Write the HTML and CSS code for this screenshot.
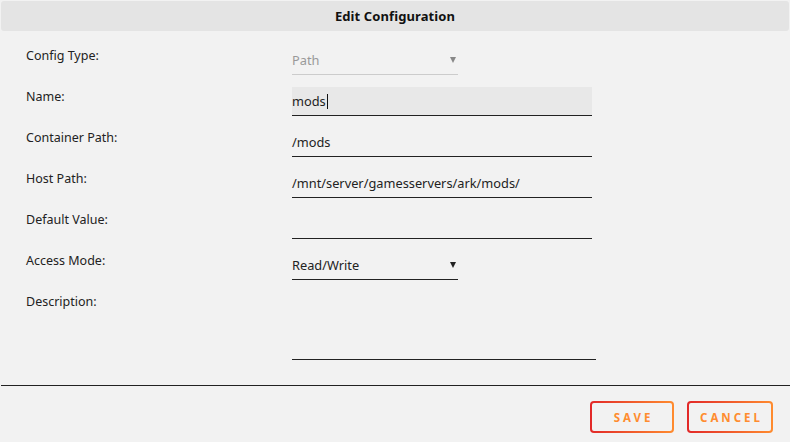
FILE: index.html
```html
<!DOCTYPE html>
<html>
<head>
<meta charset="utf-8">
<link rel="stylesheet" href="styles.css">
</head>
<body>
<div class="dialog">
  <div class="title">Edit Configuration</div>
  <div class="form">
    <div class="row">
      <div class="label">Config Type:</div>
      <div class="field select disabled"><span>Path</span><span class="arrow"></span></div>
    </div>
    <div class="row">
      <div class="label">Name:</div>
      <div class="field input focus"><span>mods</span><span class="caret"></span></div>
    </div>
    <div class="row">
      <div class="label">Container Path:</div>
      <div class="field input"><span>/mods</span></div>
    </div>
    <div class="row">
      <div class="label">Host Path:</div>
      <div class="field input"><span>/mnt/server/gamesservers/ark/mods/</span></div>
    </div>
    <div class="row">
      <div class="label">Default Value:</div>
      <div class="field input"></div>
    </div>
    <div class="row">
      <div class="label">Access Mode:</div>
      <div class="field select"><span>Read/Write</span><span class="arrow"></span></div>
    </div>
    <div class="row">
      <div class="label">Description:</div>
      <div class="field textarea"></div>
    </div>
  </div>
  <div class="footer">
    <button class="btn save">SAVE</button>
    <button class="btn cancel">CANCEL</button>
  </div>
</div>
</body>
</html>
```

FILE: styles.css
```css
html, body {
  margin: 0;
  padding: 0;
  background: #f2f2f2;
}
body {
  font-family: "Noto Sans", "Open Sans", sans-serif;
  font-size: 12.5px;
  color: #222;
}
.dialog {
  width: 790px;
  height: 442px;
  display: flex;
  flex-direction: column;
}
.title {
  margin: 1px 1px 0 1px;
  height: 30px;
  background: #e4e4e4;
  border-radius: 3px;
  display: flex;
  align-items: center;
  justify-content: center;
  font-weight: 700;
  font-size: 13px;
  color: #111;
  letter-spacing: 0.1px;
}
.form {
  padding: 15px 0 25px 25px;
  display: flex;
  flex-direction: column;
  gap: 12px;
  border-bottom: 1px solid #222;
  margin-left: 1px;
}
.row {
  display: flex;
}
.label {
  width: 266px;
  line-height: 18px;
  padding-top: 1px;
  color: #222;
}
.field {
  height: 28px;
  border-bottom: 1px solid #222;
  display: flex;
  align-items: center;
  font-size: 12.8px;
}
.input {
  width: 300px;
}
.focus {
  background: #e8e8e8;
}
.caret {
  display: inline-block;
  width: 1px;
  height: 15px;
  background: #111;
  margin-left: 1px;
}
.select {
  width: 166px;
  justify-content: space-between;
}
.select.disabled {
  color: #999;
  border-bottom-color: #ccc;
}
.arrow {
  width: 0;
  height: 0;
  border-left: 3px solid transparent;
  border-right: 3px solid transparent;
  border-top: 6px solid #222;
  margin-right: 2px;
}
.disabled .arrow {
  border-top-color: #888;
}
.textarea {
  width: 304px;
  height: 67px;
}
.footer {
  display: flex;
  justify-content: flex-end;
  gap: 13px;
  padding: 15px 17px 0 0;
}
.btn {
  height: 32px;
  border: 2px solid transparent;
  border-radius: 4px;
  background: linear-gradient(#f2f2f2, #f2f2f2) padding-box,
              linear-gradient(90deg, #e22828, #ff8c2f) border-box;
  font-family: "Noto Sans", "Open Sans", sans-serif;
  font-weight: 700;
  font-size: 11.5px;
  letter-spacing: 3px;
  color: #ff8c2f;
  padding: 0 0 0 3px;
  cursor: pointer;
}
.save {
  width: 84px;
}
.cancel {
  width: 86px;
}
```
